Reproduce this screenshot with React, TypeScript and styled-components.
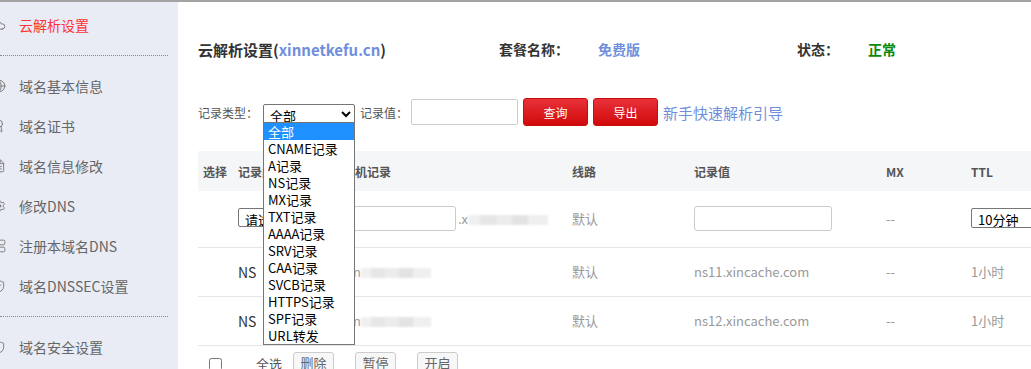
import { FC } from "react";
import styled, { createGlobalStyle } from "styled-components";
import { Cloud, Globe, Award, FileText, Settings, Server, ShieldCheck, Shield } from "lucide-react";

const GlobalStyle = createGlobalStyle`
    html, body {
        margin: 0;
        padding: 0;
        overflow: hidden;
        background: #fff;
    }
    body {
        font-family: "Noto Sans CJK SC", "Noto Sans", sans-serif;
        color: #333;
    }
`;

const menuTop = [
    { label: "云解析设置", icon: Cloud, active: true },
];
const menuMid = [
    { label: "域名基本信息", icon: Globe },
    { label: "域名证书", icon: Award },
    { label: "域名信息修改", icon: FileText },
    { label: "修改DNS", icon: Settings },
    { label: "注册本域名DNS", icon: Server },
    { label: "域名DNSSEC设置", icon: ShieldCheck },
];
const menuBottom = [{ label: "域名安全设置", icon: Shield }];

const recordTypes = [
    "全部",
    "CNAME记录",
    "A记录",
    "NS记录",
    "MX记录",
    "TXT记录",
    "AAAA记录",
    "SRV记录",
    "CAA记录",
    "SVCB记录",
    "HTTPS记录",
    "SPF记录",
    "URL转发",
];

const nsRows = ["ns11.xincache.com", "ns12.xincache.com"];

type MenuEntry = { label: string; icon: typeof Cloud; active?: boolean };

const MenuList: FC<{ items: MenuEntry[] }> = ({ items }) => (
    <>
        {items.map((item) => {
            const Icon = item.icon;
            return (
                <MenuItem key={item.label} $active={item.active}>
                    <Icon size={14} strokeWidth={1.6} />
                    <span>{item.label}</span>
                </MenuItem>
            );
        })}
    </>
);

const App: FC = () => {
    return (
        <Page>
            <GlobalStyle />
            <Sidebar>
                <MenuList items={menuTop} />
                <Divider />
                <MenuList items={menuMid} />
                <Divider />
                <MenuList items={menuBottom} />
            </Sidebar>
            <Main>
                <InfoRow>
                    <Title>
                        云解析设置(<Blue>xinnetkefu.cn</Blue>)
                    </Title>
                    <InfoLabel>套餐名称：</InfoLabel>
                    <InfoValue $color="#6f8fdc">免费版</InfoValue>
                    <InfoLabel>状态：</InfoLabel>
                    <InfoValue $color="#0a8a0a">正常</InfoValue>
                </InfoRow>

                <SearchRow>
                    <Label $w={60}>记录类型：</Label>
                    <SelectWrap>
                        <TypeSelect defaultValue="全部">
                            <option>全部</option>
                        </TypeSelect>
                        <DropList>
                            {recordTypes.map((t, i) => (
                                <DropItem key={t} $selected={i === 0}>
                                    {t}
                                </DropItem>
                            ))}
                        </DropList>
                    </SelectWrap>
                    <Label $w={47}>记录值：</Label>
                    <SearchInput />
                    <RedButton>查询</RedButton>
                    <RedButton>导出</RedButton>
                    <GuideLink>新手快速解析引导</GuideLink>
                </SearchRow>

                <Table>
                    <colgroup>
                        <col style={{ width: 35 }} />
                        <col style={{ width: 105 }} />
                        <col style={{ width: 229 }} />
                        <col style={{ width: 122 }} />
                        <col style={{ width: 192 }} />
                        <col style={{ width: 85 }} />
                        <col style={{ width: 120 }} />
                    </colgroup>
                    <thead>
                        <tr>
                            <Th>选择</Th>
                            <Th>记录类型</Th>
                            <Th>主机记录</Th>
                            <Th>线路</Th>
                            <Th>记录值</Th>
                            <Th>MX</Th>
                            <Th>TTL</Th>
                        </tr>
                    </thead>
                    <tbody>
                        <EditRow>
                            <Td />
                            <Td>
                                <CellSelect defaultValue="请选择">
                                    <option>请选择</option>
                                </CellSelect>
                            </Td>
                            <Td>
                                <HostCell>
                                    <HostInput />
                                    <Muted>.x</Muted>
                                    <Mosaic $w={80} />
                                </HostCell>
                            </Td>
                            <Td>默认</Td>
                            <Td>
                                <ValueInput />
                            </Td>
                            <Td>--</Td>
                            <Td>
                                <TtlSelect defaultValue="10分钟">
                                    <option>10分钟</option>
                                </TtlSelect>
                            </Td>
                        </EditRow>
                        {nsRows.map((ns) => (
                            <DataRow key={ns}>
                                <Td />
                                <Td $dark>NS</Td>
                                <Td>
                                    <HostCell>
                                        <Muted>xin</Muted>
                                        <Mosaic $w={70} />
                                    </HostCell>
                                </Td>
                                <Td>默认</Td>
                                <Td>{ns}</Td>
                                <Td>--</Td>
                                <Td>1小时</Td>
                            </DataRow>
                        ))}
                    </tbody>
                </Table>

                <Footer>
                    <Check type="checkbox" />
                    <SelectAll>全选</SelectAll>
                    <SmallButton>删除</SmallButton>
                    <SmallButton>暂停</SmallButton>
                    <SmallButton>开启</SmallButton>
                </Footer>
            </Main>
        </Page>
    );
};

export default App;

const Page = styled.div`
    display: flex;
    min-height: 100vh;
    border-top: 2px solid #a3a3a3;
    box-sizing: border-box;
`;

const Sidebar = styled.nav`
    width: 178px;
    flex-shrink: 0;
    background: #e9ecf5;
    padding-top: 3px;
    overflow: hidden;
`;

const MenuItem = styled.div<{ $active?: boolean }>`
    display: flex;
    align-items: center;
    height: 40px;
    font-size: 14px;
    color: ${(p) => (p.$active ? "#ff3333" : "#666")};

    svg {
        margin-left: -8px;
        margin-right: 13px;
        color: #777;
        flex-shrink: 0;
    }
`;

const Divider = styled.div`
    width: 168px;
    margin: 10px 0;
    border-top: 1px dotted #888;
`;

const Main = styled.main`
    flex: 1;
    min-width: 0;
    padding-left: 20px;
    overflow: hidden;
`;

const InfoRow = styled.div`
    display: grid;
    grid-template-columns: 301px 99px 199px 71px auto;
    align-items: center;
    height: 22px;
    margin-top: 36px;
    font-weight: bold;
`;

const Title = styled.div`
    font-size: 15px;
    color: #333;
    white-space: nowrap;
`;

const Blue = styled.span`
    color: #6f8fdc;
`;

const InfoLabel = styled.div`
    font-size: 14px;
    color: #333;
`;

const InfoValue = styled.div<{ $color: string }>`
    font-size: 14px;
    color: ${(p) => p.$color};
`;

const SearchRow = styled.div`
    display: flex;
    align-items: center;
    gap: 5px;
    height: 28px;
    margin-top: 38px;
`;

const Label = styled.span<{ $w: number }>`
    width: ${(p) => p.$w}px;
    font-size: 12px;
    color: #555;
    white-space: nowrap;
`;

const SelectWrap = styled.div`
    position: relative;
    width: 92px;
    height: 20px;
`;

const TypeSelect = styled.select`
    width: 92px;
    height: 20px;
    box-sizing: border-box;
    border: 1px solid #767676;
    border-radius: 2px;
    font-family: inherit;
    font-size: 13px;
    padding: 0 0 0 2px;
    color: #000;
    background: #fff;
`;

const DropList = styled.div`
    position: absolute;
    top: 20px;
    left: 0;
    width: 92px;
    box-sizing: border-box;
    border: 1px solid #767676;
    background: #fff;
    z-index: 10;
`;

const DropItem = styled.div<{ $selected?: boolean }>`
    height: 17px;
    line-height: 17px;
    padding-left: 4px;
    font-size: 13px;
    white-space: nowrap;
    color: ${(p) => (p.$selected ? "#fff" : "#000")};
    background: ${(p) => (p.$selected ? "#1e90ff" : "transparent")};
`;

const SearchInput = styled.input`
    width: 107px;
    height: 26px;
    box-sizing: border-box;
    border: 1px solid #ccc;
    border-radius: 2px;
    margin-left: -1px;
`;

const RedButton = styled.button`
    width: 65px;
    height: 28px;
    border: 1px solid #c80d0d;
    border-radius: 3px;
    background: linear-gradient(#e8313a, #d10a0a);
    color: #fff;
    font-family: inherit;
    font-size: 12px;
    padding: 0;
`;

const GuideLink = styled.a`
    font-size: 15px;
    color: #6f8fdc;
    white-space: nowrap;
    cursor: pointer;
`;

const Table = styled.table`
    margin-top: 25px;
    border-collapse: collapse;
    table-layout: fixed;
    width: 888px;
    font-size: 13px;
`;

const Th = styled.th`
    height: 40px;
    padding: 0 0 0 5px;
    text-align: left;
    background: #f5f6f8;
    font-size: 12px;
    font-weight: bold;
    color: #555;
    white-space: nowrap;
`;

const EditRow = styled.tr`
    height: 56px;
    border-bottom: 1px solid #e6e6e6;
`;

const DataRow = styled.tr`
    height: 49px;
    border-bottom: 1px solid #e6e6e6;
`;

const Td = styled.td<{ $dark?: boolean }>`
    padding: 0 0 0 5px;
    color: ${(p) => (p.$dark ? "#333" : "#999")};
    font-size: ${(p) => (p.$dark ? "14px" : "13px")};
    white-space: nowrap;
    overflow: hidden;
`;

const CellSelect = styled.select`
    width: 100px;
    height: 19px;
    border: 1px solid #767676;
    border-radius: 2px;
    font-family: inherit;
    font-size: 13px;
    padding: 0 0 0 2px;
    background: #fff;
    color: #000;
`;

const HostCell = styled.div`
    display: flex;
    align-items: center;
`;

const HostInput = styled.input`
    width: 113px;
    height: 25px;
    box-sizing: border-box;
    border: 1px solid #ccc;
    border-radius: 3px;
    margin-right: 2px;
`;

const Muted = styled.span`
    color: #999;
`;

const Mosaic = styled.span<{ $w: number }>`
    display: inline-block;
    width: ${(p) => p.$w}px;
    height: 10px;
    margin-top: 3px;
    background: linear-gradient(
        90deg,
        #f0f0f0 0 15%,
        #e6e6e6 15% 35%,
        #ececec 35% 55%,
        #e3e3e3 55% 75%,
        #efefef 75% 100%
    );
    filter: blur(1px);
`;

const ValueInput = styled.input`
    width: 138px;
    height: 25px;
    box-sizing: border-box;
    border: 1px solid #ccc;
    border-radius: 3px;
`;

const TtlSelect = styled.select`
    width: 100px;
    height: 20px;
    border: 1px solid #767676;
    border-radius: 2px;
    font-family: inherit;
    font-size: 13px;
    padding: 0 0 0 2px;
    background: #fff;
    color: #000;
`;

const Footer = styled.div`
    display: flex;
    align-items: flex-start;
    padding-top: 6px;
`;

const Check = styled.input`
    width: 13px;
    height: 13px;
    margin: 6px 0 0 11px;
`;

const SelectAll = styled.span`
    margin-left: 34px;
    margin-right: 11px;
    margin-top: 2px;
    font-size: 13px;
    color: #555;
`;

const SmallButton = styled.button`
    width: 41px;
    height: 22px;
    margin-right: 21px;
    border: 1px solid #ccc;
    border-radius: 3px;
    background: #f7f7f7;
    color: #666;
    font-family: inherit;
    font-size: 13px;
    padding: 0;
`;
